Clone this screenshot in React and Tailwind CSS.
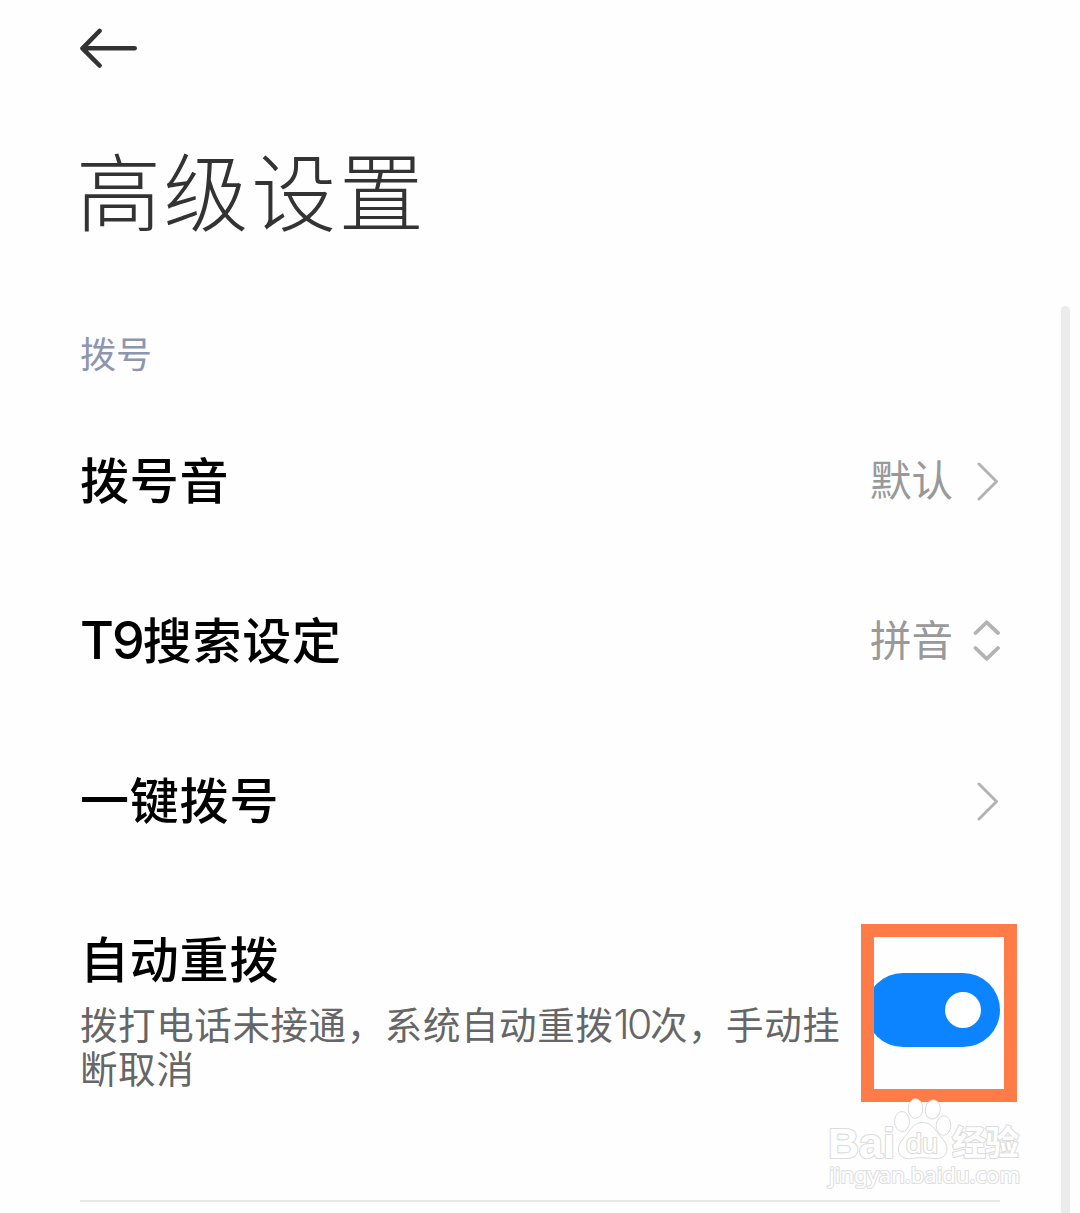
import { useState } from 'react';

const rows = [
  { key: 'tone', title: '拨号音', value: '默认', icon: 'right' },
  { key: 't9', latin: 'T9', title: '搜索设定', value: '拼音', icon: 'updown' },
  { key: 'speed', title: '一键拨号', icon: 'right' },
];

const ChevronRight = () => (
  <svg className="ml-[23px]" width="24" height="40" viewBox="0 0 24 40" fill="none" stroke="#b3b3b3" strokeWidth="3" strokeLinecap="round" strokeLinejoin="round">
    <path d="M3 3 20.500 20.500 3 38" />
  </svg>
);

const ChevronUpDown = () => (
  <svg className="ml-[19px]" width="28" height="42" viewBox="0 0 28 42" fill="none" stroke="#b3b3b3" strokeWidth="3.8" strokeLinecap="round" strokeLinejoin="round">
    <path d="M3.500 13 14.700 2.300 26 13M3.500 28 14.700 38.800 26 28" />
  </svg>
);

// 右下角水印
const Watermark = () => (
  <svg className="absolute left-[820px] top-[1090px]" width="210" height="120" viewBox="0 0 210 120" fill="#fff" stroke="#dcdcdc" strokeWidth="1">
    <ellipse cx="82" cy="31.5" rx="7.5" ry="10" />
    <ellipse cx="95.500" cy="18.5" rx="7.3" ry="9.8" />
    <ellipse cx="112.8" cy="19.5" rx="7.5" ry="9.5" transform="rotate(10 112.8 19.5)" />
    <ellipse cx="123.5" cy="35.5" rx="7.3" ry="9.8" />
    <path d="M102.500 32.500C95 32.500 91 38 88 43C83 49 78.500 53 78.500 60C78.500 66 84 69.500 91 68.500C99 67.500 106 67.500 113 68.500C121 69.500 127 66 127 59C127 52 121 48 117 42C113 36 109 32.500 102.500 32.500Z" />
    <g strokeWidth="2.2" paintOrder="stroke" strokeLinejoin="round">
      <text x="8" y="67.500" fontSize="43" fontWeight="700" fontFamily="'Liberation Sans', Arial, sans-serif" textLength="67" lengthAdjust="spacingAndGlyphs">Bai</text>
      <text x="86" y="63" fontSize="27" fontWeight="400" fontFamily="'Liberation Sans', Arial, sans-serif" textLength="32" lengthAdjust="spacingAndGlyphs">du</text>
      <text x="132" y="64.500" fontSize="34" fontWeight="700" fontFamily="'Noto Sans CJK SC', sans-serif" textLength="67">经验</text>
      <text x="9" y="93" fontSize="22" stroke="#e0e0e0" fontFamily="'Noto Sans', sans-serif" fontWeight="400" textLength="191" lengthAdjust="spacingAndGlyphs">jingyan.baidu.com</text>
    </g>
  </svg>
);

export default function App() {
  const [autoRedial, setAutoRedial] = useState(true);

  return (
    <div className="relative flex h-[1213px] w-[1080px] overflow-hidden bg-[#fefefe] font-['Noto_Sans_CJK_SC',sans-serif]">
      <main className="flex w-[1000px] shrink-0 flex-col pl-20">
        <button className="mt-[28px] h-10 w-[58px]" aria-label="返回">
          <svg width="58" height="40" viewBox="0 0 58 40" fill="none" stroke="#333" strokeWidth="4.6" strokeLinecap="round" strokeLinejoin="round">
            <path d="M19.500 3 2.500 20.300 19.500 37.500M3 20.300H54.700" />
          </svg>
        </button>

        <h1 className="mt-[60px] -ml-1 h-[120px] whitespace-nowrap text-[85px] leading-[120px] font-light tracking-[2.6px] text-[#333]">高级设置</h1>

        <h2 className="mt-[79px] h-[50px] text-[36px] leading-[50px] text-[#8d95b0]">拨号</h2>

        <div className="mt-[24px]">
          {rows.map(r => (
            <div key={r.key} className="flex h-40 items-center justify-between">
              <div className="pb-[7px] text-[49px] leading-[60px] font-medium tracking-[0.8px] text-black">
                {r.latin && <span className="font-['Inter'] text-[52px] leading-none tracking-[-2px]">{r.latin}</span>}
                {r.title}
              </div>
              <div className="flex items-center text-[41.5px] leading-[60px] text-[#999]">
                {r.value && <span className="pb-[7px]">{r.value}</span>}
                {r.icon === 'right' ? <ChevronRight /> : <ChevronUpDown />}
              </div>
            </div>
          ))}
        </div>

        <div className="flex h-[321px] border-b-2 border-[#e6e6e6]">
          <div className="w-[781px] shrink-0 pt-[46px]">
            <div className="text-[49px] leading-[60px] font-medium tracking-[0.8px] text-black">自动重拨</div>
            <p className="mt-[14px] whitespace-nowrap text-[37.5px] leading-[44px] tracking-[0.6px] text-[#666]">
              拨打电话未接通，系统自动重拨<span className="font-['Inter'] font-light text-[41px] leading-none tracking-[-2.5px]">10</span>次，手动挂<br />断取消
            </p>
          </div>
          {/* 橙色提示框，里面是开关 */}
          <div className="mt-[43px] h-[178px] w-[156px] shrink-0 border-[13px] border-[#ff7b47]">
            <button
              onClick={() => setAutoRedial(!autoRedial)}
              role="switch"
              aria-checked={autoRedial}
              className="flex h-full w-full items-center overflow-hidden pb-[6px]"
            >
              <span className={`-ml-[8px] flex h-[74px] w-[134px] shrink-0 items-center rounded-full px-[19px] ${autoRedial ? 'justify-end bg-[#0d84ff]' : 'justify-start bg-gray-200'}`}>
                <span className="h-9 w-9 rounded-full bg-white" />
              </span>
            </button>
          </div>
        </div>
      </main>

      <div className="mt-[306px] ml-[61px] w-[9px] rounded-t-full bg-[#ebebeb]" />
      <Watermark />
    </div>
  );
}
